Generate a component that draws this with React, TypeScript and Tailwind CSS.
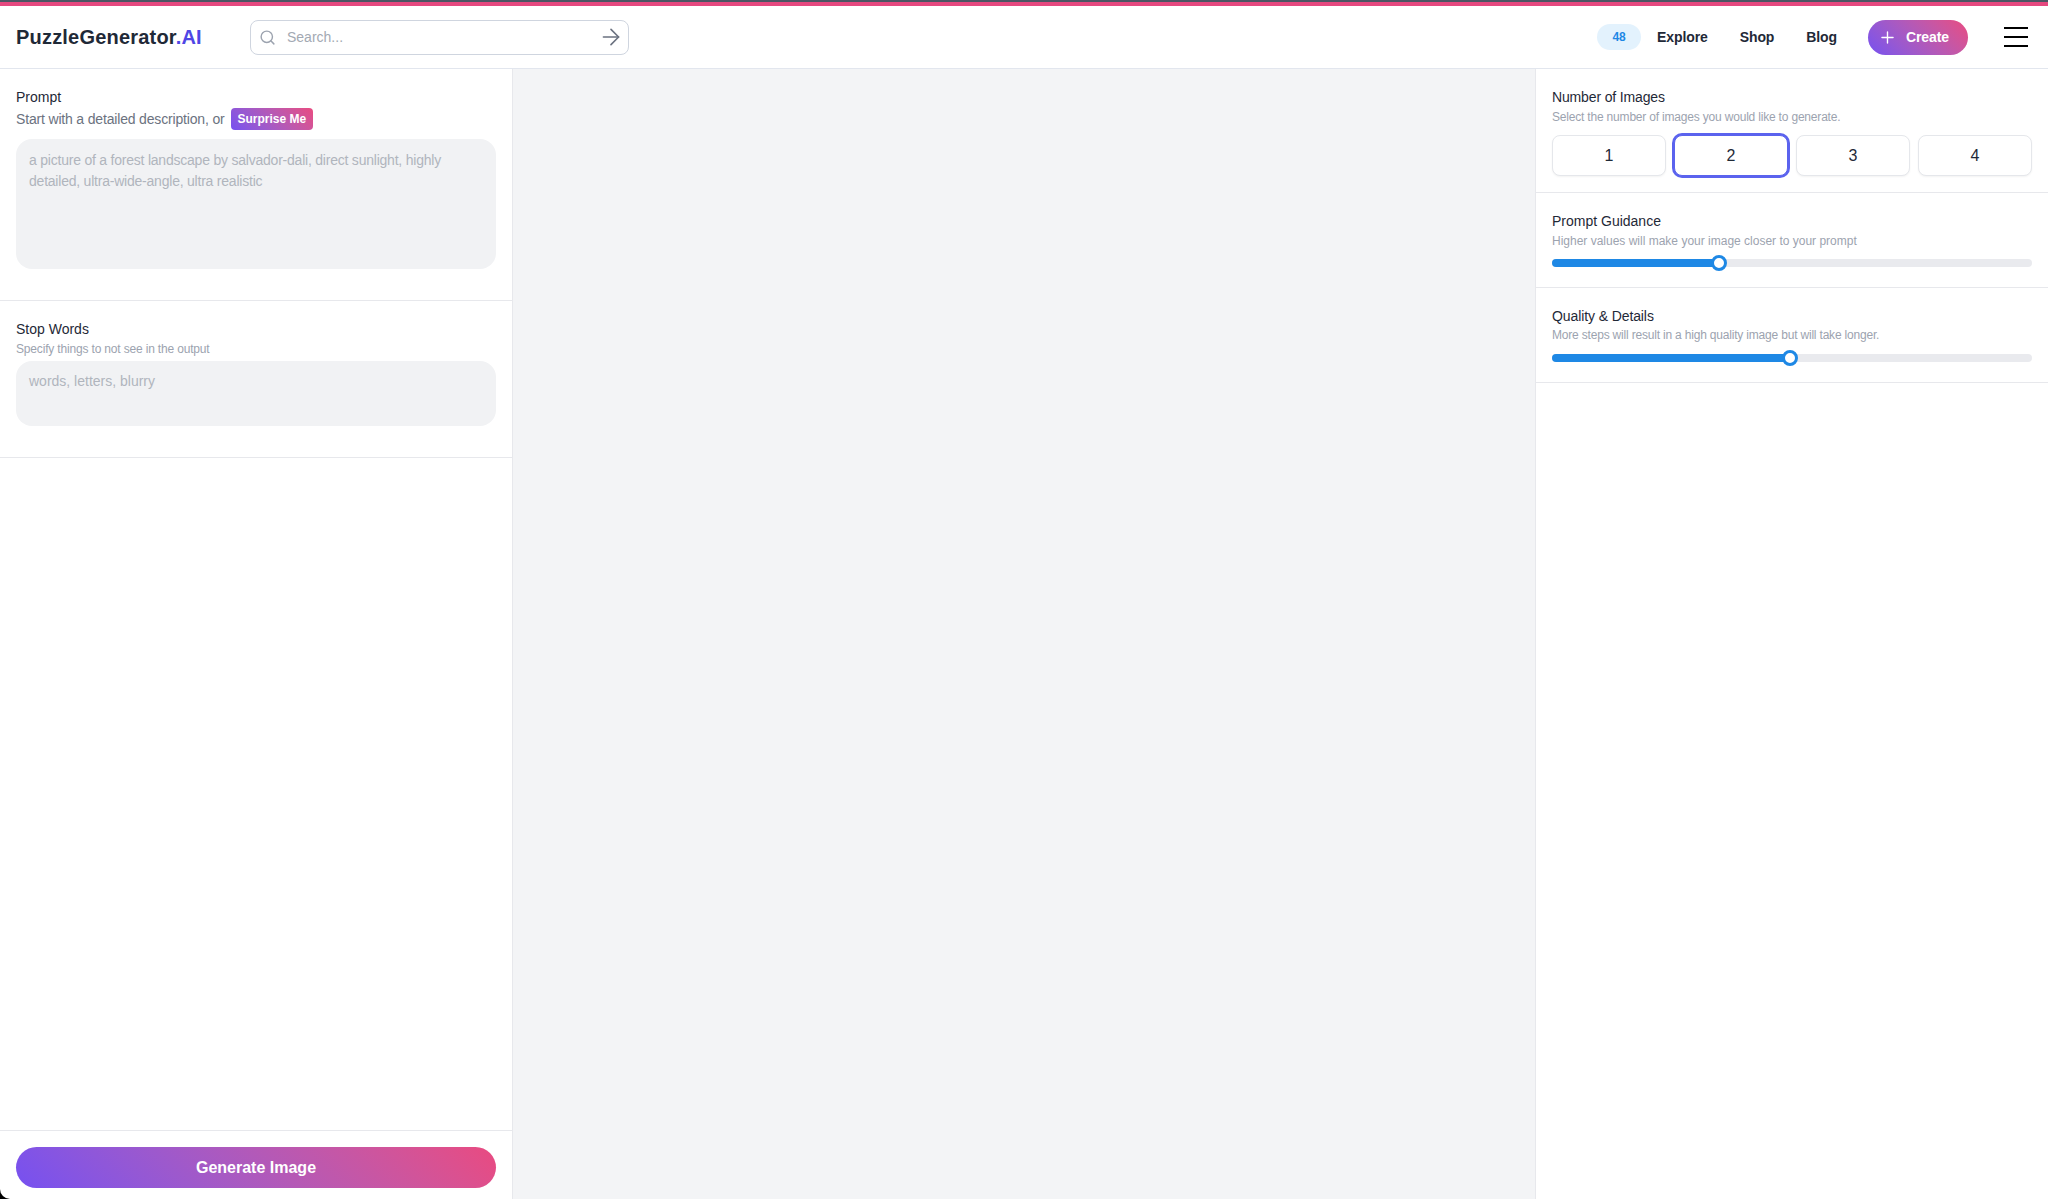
import React from 'react';
import { ArrowRight, Plus, Search } from 'lucide-react';

const gradient = 'bg-linear-45 from-[#7650f0] to-[#e94a80]';

const Section = ({ children, className = '' }: { children: React.ReactNode; className?: string }) => (
  <div className={`border-b border-[#e7e8ec] px-4 ${className}`}>{children}</div>
);

const Slider = ({ value }: { value: number }) => (
  <div className="relative mt-[10px] h-2 rounded-full bg-[#e9eaee]">
    <div className="h-2 rounded-full bg-[#1e88e5]" style={{ width: `${value}%` }} />
    <div
      className="absolute top-1/2 h-4 w-4 -translate-x-1/2 -translate-y-1/2 rounded-full border-[3px] border-[#1e88e5] bg-white"
      style={{ left: `${value}%` }}
    />
  </div>
);

const App = () => {
  const counts = [1, 2, 3, 4];

  return (
    <div className="h-[1199px] overflow-hidden bg-black">
      <div className="flex h-full flex-col overflow-hidden rounded-bl-[10px] bg-white font-['Liberation_Sans',sans-serif] text-[#1f2937]">
        <div className="h-[6px] border-t-2 border-[#4b5563] bg-[#e5487f]" />

        {/* Top nav */}
        <header className="flex h-[63px] items-center border-b border-[#e2e6ee] pr-5 pl-4">
          <div className="w-[234px] text-[20px] font-bold tracking-[0.2px] text-[#1f2937]">
            PuzzleGenerator<span className="text-[#4f46e5]">.AI</span>
          </div>
          <div className="flex h-[35px] w-[379px] items-center rounded-lg border border-[#cfd5df] pr-1 pl-2">
            <Search size={17} className="text-[#9ca3af]" />
            <span className="ml-[11px] flex-1 text-sm text-[#a3a9b3]">Search...</span>
            <ArrowRight size={26} strokeWidth={1.5} className="text-[#6b7280]" />
          </div>
          <div className="ml-auto flex items-center text-sm font-bold tracking-[-0.1px] text-[#1f2937]">
            <span className="flex h-[26px] w-[44px] items-center justify-center rounded-full bg-[#e3f2fd] text-xs text-[#1e88e5]">
              48
            </span>
            <a className="ml-4">Explore</a>
            <a className="ml-8">Shop</a>
            <a className="ml-8">Blog</a>
            <button className={`ml-[31px] flex h-[35px] w-[100px] items-center gap-[9px] rounded-full pl-[10px] text-white ${gradient}`}>
              <Plus size={19} strokeWidth={1.75} />
              Create
            </button>
            <div className="ml-9 flex w-6 flex-col gap-[7px]">
              <span className="h-[2px] bg-black" />
              <span className="h-[2px] bg-black" />
              <span className="h-[2px] bg-black" />
            </div>
          </div>
        </header>

        <div className="flex min-h-0 flex-1">
          {/* Left panel */}
          <aside className="flex w-[513px] flex-col border-r border-[#e7e8ec]">
            <Section className="h-[232px] pt-[20px]">
              <div className="text-sm leading-4">Prompt</div>
              <div className="mt-[3px] flex items-center text-sm leading-[22px] tracking-[-0.17px] text-[#6b7280]">
                Start with a detailed description, or
                <span className={`ml-[6px] rounded px-[7px] pt-px text-xs leading-[21px] font-bold tracking-normal text-white ${gradient}`}>
                  Surprise Me
                </span>
              </div>
              <div className="mt-[9px] h-[130px] rounded-2xl bg-[#f1f2f4] px-[13px] pt-[11px] text-sm leading-[20.5px] tracking-[-0.22px] text-[#b0b5bd]">
                a picture of a forest landscape by salvador-dali, direct sunlight, highly detailed, ultra-wide-angle, ultra realistic
              </div>
            </Section>
            <Section className="h-[157px] pt-[20px]">
              <div className="text-sm leading-4">Stop Words</div>
              <div className="mt-[4px] text-xs leading-4 tracking-[-0.17px] text-[#9ca3af]">Specify things to not see in the output</div>
              <div className="mt-[4px] h-[65px] rounded-2xl bg-[#f1f2f4] px-[13px] pt-[10px] text-sm leading-5 text-[#b0b5bd]">
                words, letters, blurry
              </div>
            </Section>
            <div className="mt-auto border-t border-[#e7e8ec] px-4 pt-4 pb-[11px]">
              <button className={`h-[41px] w-full rounded-full text-base font-bold text-white ${gradient}`}>
                Generate Image
              </button>
            </div>
          </aside>

          <main className="flex-1 bg-[#f3f4f6]" />

          {/* Right panel */}
          <aside className="w-[513px] border-l border-[#e7e8ec]">
            <Section className="h-[124px] pt-[20px]">
              <div className="text-sm leading-4 tracking-[-0.15px]">Number of Images</div>
              <div className="mt-[4px] text-xs leading-4 tracking-[-0.19px] text-[#9ca3af]">Select the number of images you would like to generate.</div>
              <div className="mt-[10px] grid grid-cols-4 gap-2">
                {counts.map((n) => (
                  <button
                    key={n}
                    className={`h-[41px] rounded-lg border bg-white text-base shadow-xs ${
                      n === 2 ? 'border-[#5b63ee] ring-2 ring-[#5b63ee]' : 'border-[#e5e7eb]'
                    }`}
                  >
                    {n}
                  </button>
                ))}
              </div>
            </Section>
            <Section className="h-[95px] pt-[20px]">
              <div className="text-sm leading-4">Prompt Guidance</div>
              <div className="mt-[4px] text-xs leading-4 text-[#9ca3af]">Higher values will make your image closer to your prompt</div>
              <Slider value={34.8} />
            </Section>
            <Section className="h-[95px] pt-[20px]">
              <div className="text-sm leading-4 tracking-[-0.1px]">Quality &amp; Details</div>
              <div className="mt-[3px] text-xs leading-4 tracking-[-0.19px] text-[#9ca3af]">More steps will result in a high quality image but will take longer.</div>
              <div className="pt-px">
                <Slider value={49.6} />
              </div>
            </Section>
          </aside>
        </div>
      </div>
    </div>
  );
};

export default App;
